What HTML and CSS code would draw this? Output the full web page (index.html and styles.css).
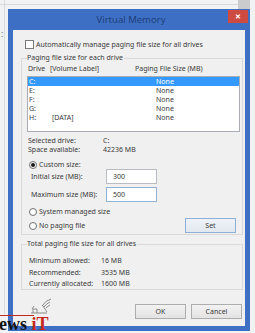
FILE: index.html
```html
<!DOCTYPE html>
<html>
<head>
<meta charset="utf-8">
<link rel="stylesheet" href="styles.css">
</head>
<body>
<div class="backdrop-line-h"></div>
<div class="backdrop-line-v"></div>
<div class="backdrop-box"></div>
<span class="backdrop-colon">:</span>

<div class="window">
  <div class="titlebar">
    <span class="title">Virtual Memory</span>
    <span class="close">&#x2715;</span>
  </div>
  <div class="client">
    <div class="check-row">
      <span class="checkbox"></span>
      <span>Automatically manage paging file size for all drives</span>
    </div>

    <div class="group group-drives">
      <div class="group-label">Paging file size for each drive</div>
      <div class="list-head">
        <span>Drive</span><span>[Volume Label]</span><span>Paging File Size (MB)</span>
      </div>
      <div class="listbox">
        <div class="list-row selected"><span>C:</span><span></span><span>None</span></div>
        <div class="list-row"><span>E:</span><span></span><span>None</span></div>
        <div class="list-row"><span>F:</span><span></span><span>None</span></div>
        <div class="list-row"><span>G:</span><span></span><span>None</span></div>
        <div class="list-row"><span>H:</span><span>[DATA]</span><span>None</span></div>
      </div>
      <div class="info info-first"><span>Selected drive:</span><span>C:</span></div>
      <div class="info"><span>Space available:</span><span>42236 MB</span></div>

      <div class="radio-row radio-custom"><span class="radio on"></span><span>Custom size:</span></div>
      <div class="field-row field-initial"><span>Initial size (MB):</span><span class="textbox">300</span></div>
      <div class="field-row field-max"><span>Maximum size (MB):</span><span class="textbox focus">500</span></div>
      <div class="radio-row radio-system"><span class="radio"></span><span>System managed size</span></div>
      <div class="set-row">
        <div class="radio-row"><span class="radio"></span><span>No paging file</span></div>
        <span class="button set">Set</span>
      </div>
    </div>

    <div class="group group-total">
      <div class="group-label">Total paging file size for all drives</div>
      <div class="total total-first"><span>Minimum allowed:</span><span>16 MB</span></div>
      <div class="total total-rec"><span>Recommended:</span><span>3535 MB</span></div>
      <div class="total total-cur"><span>Currently allocated:</span><span>1600 MB</span></div>
    </div>

    <div class="buttons">
      <span class="button">OK</span>
      <span class="button">Cancel</span>
    </div>
  </div>
</div>

<div class="watermark">
  <svg class="wm-logo" width="24" height="20" viewBox="0 0 24 20">
    <g fill="none" stroke="#8a8a8a" stroke-width="1">
      <path d="M13 9 q4 -6 9 -7"/>
      <path d="M15 10 q3 -4 6 -5"/>
      <path d="M17 11 q2 -2 4 -3"/>
      <path d="M14 9 l4 6"/>
      <path d="M2 16 h16"/>
      <path d="M4 16 v-4 h4 v4"/>
      <path d="M3 12 l2 -3"/>
    </g>
  </svg>
  <div class="wm-rule"></div>
  <div class="wm-text"><span class="wm-black">ews</span> <span class="wm-red">iT</span></div>
</div>
</body>
</html>
```

FILE: styles.css
```css
html, body {
  margin: 0;
  padding: 0;
}
body {
  box-sizing: border-box;
  width: 255px;
  height: 333px;
  padding-top: 9px;
  overflow: hidden;
  background: #f1f2f3;
  position: relative;
  font-family: "Noto Sans", "Open Sans", sans-serif;
  font-size: 7px;
  color: #3a3a3a;
}
.backdrop-line-h {
  position: absolute;
  left: 0;
  top: 4px;
  width: 238px;
  height: 1px;
  background: #d6d8da;
}
.backdrop-line-v {
  position: absolute;
  left: 4px;
  top: 0;
  width: 1px;
  height: 314px;
  background: #d8dadc;
}
.backdrop-box {
  position: absolute;
  left: 238px;
  top: 0;
  width: 12px;
  height: 9px;
  background: #c9cbcd;
}
.backdrop-colon {
  position: absolute;
  left: 1px;
  top: 28px;
  font-size: 8px;
  color: #555;
}

.window {
  position: relative;
  margin: 0 0 0 8px;
  width: 232px;
  padding: 0 5px 5px 5px;
  background: #3d70c4;
}
.titlebar {
  height: 21px;
  display: flex;
  align-items: center;
  justify-content: center;
  background: #3d70c4;
}
.title {
  font-family: "Noto Sans", sans-serif;
  font-size: 9.5px;
  color: #1d3f7c;
  padding-left: 4px;
}
.close {
  position: absolute;
  right: 2px;
  top: 1px;
  width: 20px;
  height: 13px;
  background: #cf4a40;
  color: #fff;
  font-size: 7px;
  line-height: 13px;
  text-align: center;
  font-weight: bold;
}
.client {
  background: #f0f0f0;
  padding: 10px 0 7px 0;
}
.check-row {
  display: flex;
  align-items: center;
  height: 9px;
  line-height: 9px;
  padding-left: 12px;
  gap: 2px;
}
.checkbox {
  width: 7px;
  height: 7px;
  border: 1px solid #7a7a7a;
  background: #fff;
}
.group {
  margin: 9px 2px 0 8px;
  border: 1px solid #d9d9d9;
  padding: 0 0 1px 5px;
  line-height: 9px;
}
.group-label {
  display: block;
  width: fit-content;
  margin-top: -6px;
  padding: 0 1px 0 0;
  background: #f0f0f0;
  height: 9px;
}
.list-head {
  margin-top: 2px;
  padding-left: 1px;
  display: grid;
  grid-template-columns: 22px 85px auto;
  height: 9px;
}
.listbox {
  margin: 3px 2px 0 0;
  height: 54px;
  border: 1px solid #a9acb2;
  background: #fff;
}
.list-row {
  display: grid;
  grid-template-columns: 23px 104px auto;
  padding-left: 1px;
  height: 9px;
}
.list-row.selected {
  background: #3399ff;
  color: #fff;
}
.info {
  display: grid;
  grid-template-columns: 75px auto;
  padding-left: 1px;
  height: 9px;
}
.info-first {
  margin-top: 4px;
}
.radio-row {
  display: flex;
  align-items: center;
  gap: 2px;
  height: 9px;
  padding-left: 2px;
}
.radio {
  width: 6px;
  height: 6px;
  border: 1px solid #6f6f6f;
  border-radius: 50%;
  background: #fff;
  display: flex;
  align-items: center;
  justify-content: center;
}
.radio.on::after {
  content: "";
  width: 4px;
  height: 4px;
  border-radius: 50%;
  background: #1a1a1a;
}
.radio-custom {
  margin-top: 6px;
}
.field-row {
  display: grid;
  grid-template-columns: 75px 51px;
  align-items: center;
  padding-left: 4px;
  height: 15px;
}
.field-max {
  margin-top: 3px;
}
.textbox {
  height: 13px;
  border: 1px solid #b9bcc2;
  background: #fff;
  padding-left: 6px;
  line-height: 13px;
  box-sizing: content-box;
  width: 43px;
}
.textbox.focus {
  border-color: #8fb2d8;
}
.radio-system {
  margin-top: 5px;
}
.set-row {
  margin-top: 2px;
  height: 15px;
  display: flex;
  align-items: center;
  justify-content: space-between;
  padding-right: 6px;
}
.button {
  display: block;
  height: 13px;
  line-height: 13px;
  border: 1px solid #adadad;
  background: linear-gradient(#f2f2f2, #e3e3e3);
  text-align: center;
  width: 49px;
}
.set {
  border-color: #8fb0d6;
  background: linear-gradient(#eef3f9, #e2e8ef);
}
.group-total {
  margin-top: 9px;
}
.total {
  display: grid;
  grid-template-columns: 72px auto;
  padding-left: 2px;
  height: 9px;
}
.total-first {
  margin-top: 8px;
}
.total-rec {
  margin-top: 3px;
}
.total-cur {
  margin-top: 2px;
}
.buttons {
  margin-top: 14px;
  display: flex;
  justify-content: flex-end;
  gap: 5px;
  padding-right: 3px;
  height: 15px;
}

.watermark {
  position: absolute;
  left: 0;
  top: 296px;
  width: 60px;
  height: 37px;
}
.wm-logo {
  position: absolute;
  left: 29px;
  top: 1px;
}
.wm-rule {
  position: absolute;
  left: 0;
  top: 19px;
  width: 34px;
  height: 1px;
  background: #c0281e;
}
.wm-text {
  position: absolute;
  left: -1px;
  top: 18px;
  font-family: "Liberation Serif", serif;
  font-weight: bold;
  font-size: 18px;
  line-height: 20px;
  white-space: nowrap;
}
.wm-black {
  color: #111;
}
.wm-red {
  color: #c6261c;
}
```
